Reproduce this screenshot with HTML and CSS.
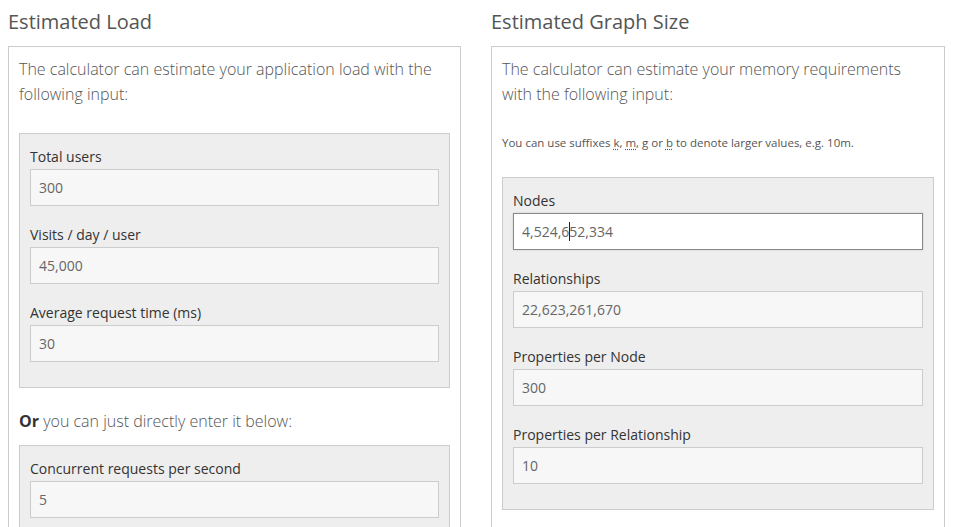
FILE: index.html
```html
<!DOCTYPE html>
<html lang="en">
<head>
    <meta charset="UTF-8">
    <meta name="viewport" content="width=device-width, initial-scale=1.0">
    <title>Hardware Sizing Calculator</title>
    <link rel="stylesheet" href="styles.css">
</head>
<body>
    <div class="calculator">
        <section class="column">
            <h2>Estimated Load</h2>
            <div class="panel">
                <p class="intro">The calculator can estimate your application load with the following input:</p>
                <div class="well">
                    <div class="field">
                        <label for="total-users">Total users</label>
                        <input type="text" id="total-users" value="300">
                    </div>
                    <div class="field">
                        <label for="visits">Visits / day / user</label>
                        <input type="text" id="visits" value="45,000">
                    </div>
                    <div class="field">
                        <label for="request-time">Average request time (ms)</label>
                        <input type="text" id="request-time" value="30">
                    </div>
                </div>
                <p class="intro or-line"><strong>Or</strong> you can just directly enter it below:</p>
                <div class="well">
                    <div class="field">
                        <label for="concurrent">Concurrent requests per second</label>
                        <input type="text" id="concurrent" value="5">
                    </div>
                </div>
            </div>
        </section>
        <section class="column">
            <h2>Estimated Graph Size</h2>
            <div class="panel">
                <p class="intro">The calculator can estimate your memory requirements with the following input:</p>
                <p class="hint">You can use suffixes <abbr title="thousand">k</abbr>, <abbr title="million">m</abbr>, g or <abbr title="billion">b</abbr> to denote larger values, e.g. 10m.</p>
                <div class="well">
                    <div class="field">
                        <label for="nodes">Nodes</label>
                        <div class="input-wrap">
                            <input type="text" id="nodes" class="focused" value="4,524,652,334">
                            <!-- caret mirror: the typed part before the cursor -->
                            <span class="caret" aria-hidden="true">4,524,6</span>
                        </div>
                    </div>
                    <div class="field">
                        <label for="relationships">Relationships</label>
                        <input type="text" id="relationships" value="22,623,261,670">
                    </div>
                    <div class="field">
                        <label for="node-props">Properties per Node</label>
                        <input type="text" id="node-props" value="300">
                    </div>
                    <div class="field">
                        <label for="rel-props">Properties per Relationship</label>
                        <input type="text" id="rel-props" value="10">
                    </div>
                </div>
            </div>
        </section>
    </div>
</body>
</html>
```

FILE: styles.css
```css
/* Calculadora de hardware */
body {
    font-family: 'Open Sans', 'Liberation Sans', sans-serif;
    color: #333;
    background-color: #fff;
    margin: 0;
    padding: 0 8px;
}
.calculator {
    display: grid;
    grid-template-columns: 453px 454px;
    column-gap: 30px;
}
.column {
    display: flex;
    flex-direction: column;
}
h2 {
    font-size: 20px;
    font-weight: 400;
    color: #555;
    line-height: 28px;
    margin: 8px 0 10px;
}
.panel {
    flex: 1;
    border: 1px solid #ccc;
    padding: 10px 10px 10px;
}
.intro {
    font-size: 16px;
    font-weight: 300;
    line-height: 25px;
    color: #555;
    margin: 0 0 26px;
}
.intro strong {
    font-weight: 700;
    color: #333;
}
.or-line {
    margin: 21px 0 11px;
}
.hint {
    font-size: 11.5px;
    line-height: 20px;
    color: #555;
    margin: 0 0 24px;
}
.hint abbr {
    text-decoration: underline dotted;
    text-underline-offset: 2px;
}
.well {
    background-color: #eee;
    border: 1px solid #ccc;
    padding: 13px 10px 6px;
}
.field {
    margin-bottom: 19px;
}
.field label {
    display: block;
    font-size: 14px;
    line-height: 20px;
    margin-bottom: 2px;
    color: #333;
}
.field input {
    display: block;
    box-sizing: border-box;
    width: 100%;
    height: 37px;
    padding: 0 8px;
    font-family: inherit;
    font-size: 14px;
    color: #666;
    background-color: #f7f7f7;
    border: 1px solid #ccc;
    border-radius: 0;
    outline: none;
}
.field input.focused {
    background-color: #fff;
    border-color: #888;
    color: #666;
    box-shadow: 0 0 2px rgba(0, 0, 0, 0.15);
}
.input-wrap {
    position: relative;
}
.caret {
    position: absolute;
    left: 9px;
    top: 9px;
    height: 19px;
    font-size: 14px;
    line-height: 19px;
    color: transparent;
    border-right: 1px solid #222;
    pointer-events: none;
}
```
